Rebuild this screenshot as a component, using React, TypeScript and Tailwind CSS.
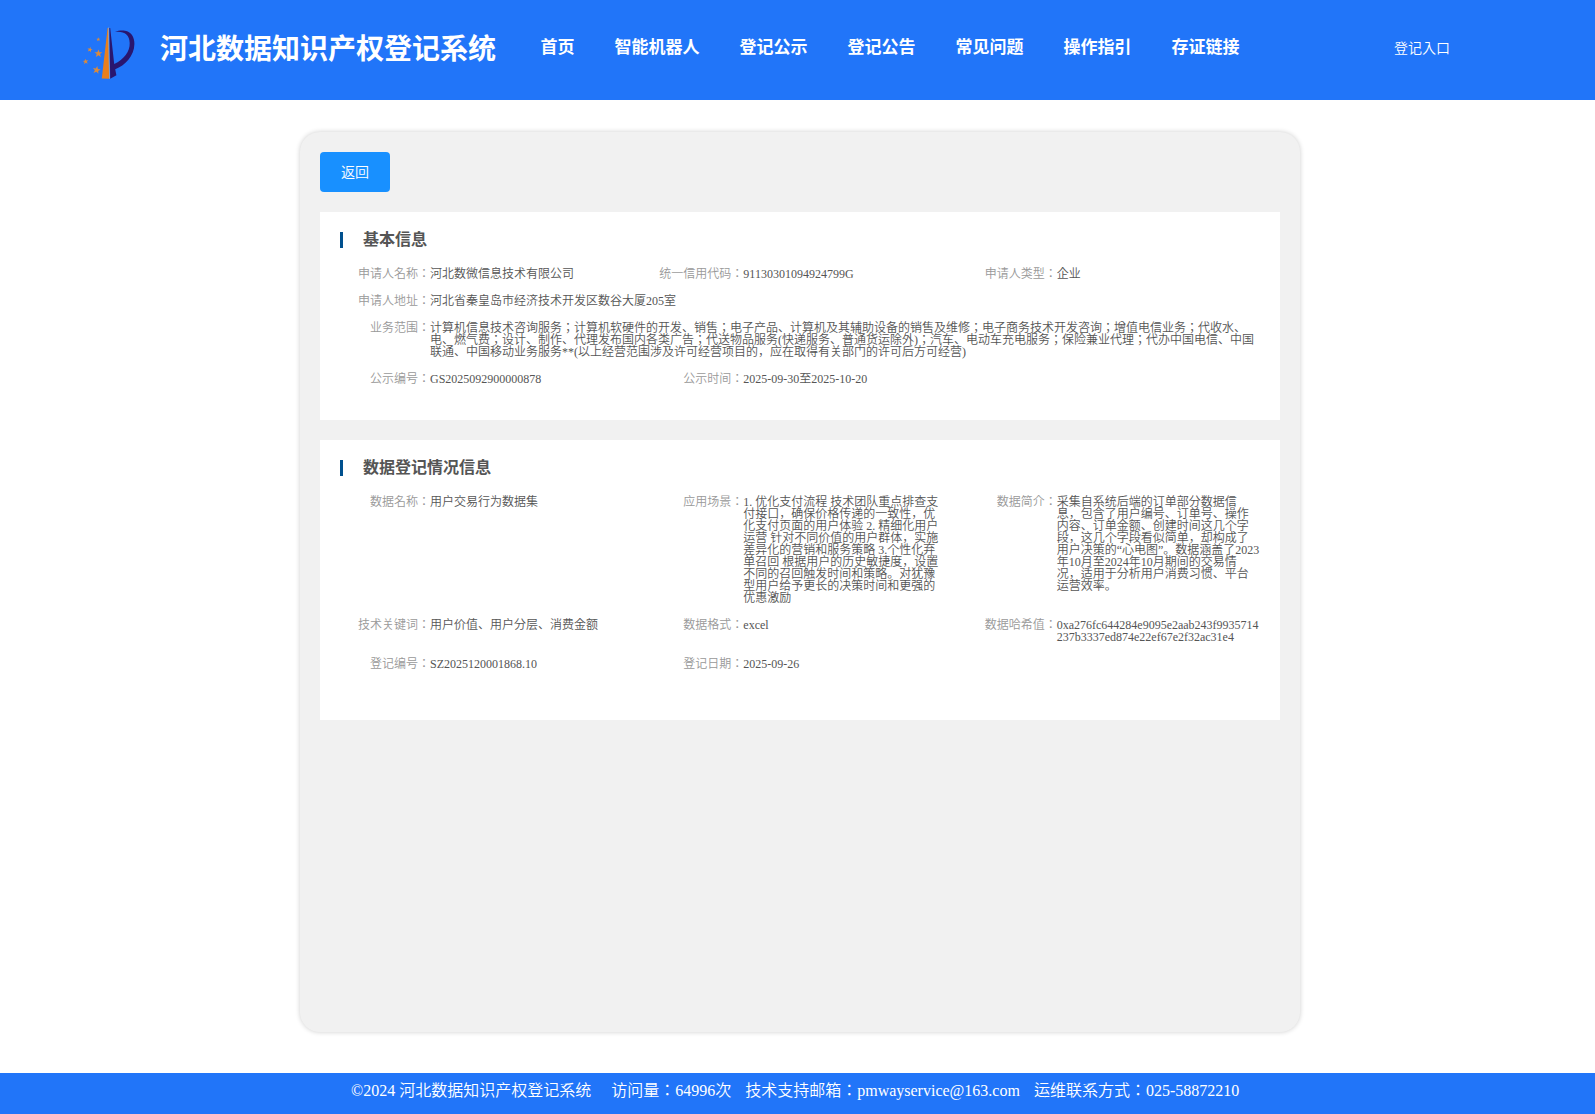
import React from 'react';

interface Field {
  label: string;
  value: string;
  wide?: boolean;
}

interface SectionProps {
  title: string;
  fields: Field[];
  className?: string;
}

const navItems = ['首页', '智能机器人', '登记公示', '登记公告', '常见问题', '操作指引', '存证链接'];

const basicFields: Field[] = [
  { label: '申请人名称', value: '河北数微信息技术有限公司' },
  { label: '统一信用代码', value: '91130301094924799G' },
  { label: '申请人类型', value: '企业' },
  { label: '申请人地址', value: '河北省秦皇岛市经济技术开发区数谷大厦205室', wide: true },
  {
    label: '业务范围',
    value:
      '计算机信息技术咨询服务；计算机软硬件的开发、销售；电子产品、计算机及其辅助设备的销售及维修；电子商务技术开发咨询；增值电信业务；代收水、电、燃气费；设计、制作、代理发布国内各类广告；代送物品服务(快递服务、普通货运除外)；汽车、电动车充电服务；保险兼业代理；代办中国电信、中国联通、中国移动业务服务**(以上经营范围涉及许可经营项目的，应在取得有关部门的许可后方可经营)',
    wide: true,
  },
  { label: '公示编号', value: 'GS2025092900000878' },
  { label: '公示时间', value: '2025-09-30至2025-10-20' },
];

const dataFields: Field[] = [
  { label: '数据名称', value: '用户交易行为数据集' },
  {
    label: '应用场景',
    value:
      '1. 优化支付流程 技术团队重点排查支付接口，确保价格传递的一致性，优化支付页面的用户体验 2. 精细化用户运营 针对不同价值的用户群体，实施差异化的营销和服务策略 3.个性化弃单召回 根据用户的历史敏捷度，设置不同的召回触发时间和策略。对犹豫型用户给予更长的决策时间和更强的优惠激励',
  },
  {
    label: '数据简介',
    value:
      '采集自系统后端的订单部分数据信息，包含了用户编号、订单号、操作内容、订单金额、创建时间这几个字段，这几个字段看似简单，却构成了用户决策的“心电图”。数据涵盖了2023年10月至2024年10月期间的交易情况，适用于分析用户消费习惯、平台运营效率。',
  },
  { label: '技术关键词', value: '用户价值、用户分层、消费金额' },
  { label: '数据格式', value: 'excel' },
  { label: '数据哈希值', value: '0xa276fc644284e9095e2aab243f9935714237b3337ed874e22ef67e2f32ac31e4' },
  { label: '登记编号', value: 'SZ2025120001868.10' },
  { label: '登记日期', value: '2025-09-26' },
];

const STAR = 'M0 -3.4 L0.9 -1.1 L3.3 -1.1 L1.4 0.5 L2.1 2.9 L0 1.5 L-2.1 2.9 L-1.4 0.5 L-3.3 -1.1 L-0.9 -1.1 Z';

const Logo: React.FC = () => (
  <svg width="80" height="80" viewBox="0 0 80 80" className="shrink-0">
    <path d="M37.6 13 L38.6 13 L39.2 63.8 L31.8 63.4 Z" fill="#e97f1c" />
    <path d="M38 12.5 L38.8 12.5 L39.9 63.8 L39.1 63.8 Z" fill="#8fa6c9" />
    <path
      d="M39.4 13 L40.2 13 L44.2 49 C54 44.5 60 36.5 59.7 28 C59.5 19.5 54 15.9 45 16.9 C48 15.5 52 15.3 55 15.7 C61 16.5 64.6 22 64.4 29 C64.2 41 55 50.5 45.2 54.2 L46.4 60.3 L40.2 63.8 Z"
      fill="#29166f"
    />
    <g fill="#d98a3d">
      <path d={STAR} transform="translate(28.4 38.5) scale(1.2)" />
      <path d={STAR} transform="translate(26.6 55) rotate(10) scale(1.2)" />
      <path d={STAR} transform="translate(19.9 34.7) rotate(12) scale(0.8)" />
      <path d={STAR} transform="translate(15.6 46.5) rotate(-8) scale(0.85)" />
      <path d={STAR} transform="translate(28.3 24.4) scale(0.6)" />
    </g>
  </svg>
);

const Section: React.FC<SectionProps> = ({ title, fields, className = '' }) => (
  <section className={`bg-white pt-5 pl-5 ${className}`}>
    <h3 className="mb-5 border-l-[3px] border-[#00508e] pl-5 text-base leading-4 font-bold text-[#555]">{title}</h3>
    <div className="grid grid-cols-3 gap-y-[15px] text-xs leading-3">
      {fields.map((field) => (
        <div key={field.label} className={`flex pr-5 ${field.wide ? 'col-span-3' : ''}`}>
          <span className="w-[90px] shrink-0 text-right text-[#999]">{field.label}：</span>
          <span className="min-w-0 flex-1 break-words text-[#555]">{field.value}</span>
        </div>
      ))}
    </div>
  </section>
);

const App: React.FC = () => {
  return (
    <div className="flex h-[1114px] flex-col bg-white font-['Liberation_Serif','Noto_Sans_CJK_JP',serif] font-[350]">
      {/* Header */}
      <header className="flex h-[100px] shrink-0 items-start bg-[#2175f9] pt-[15px] pl-[70px] text-white">
        <Logo />
        <h1 className="mt-[15px] ml-[10px] text-[28px] leading-10 font-bold whitespace-nowrap">河北数据知识产权登记系统</h1>
        <nav className="mt-[21px] ml-[44.45px] flex gap-10 text-[17px] leading-6 font-bold whitespace-nowrap">
          {navItems.map((item) => (
            <a key={item} href="#">
              {item}
            </a>
          ))}
        </nav>
        <a href="#" className="mt-6 ml-[154.5px] text-sm whitespace-nowrap">
          登记入口
        </a>
      </header>

      {/* Content */}
      <main className="mt-8 ml-[300px] h-[900px] w-[1000px] shrink-0 rounded-[20px] bg-[#f1f1f1] p-5 shadow-[0_0_5px_rgba(0,0,0,0.2)]">
        <button className="mb-5 block h-10 w-[70px] rounded bg-[#1890ff] pt-px text-sm text-white">返回</button>
        <Section title="基本信息" fields={basicFields} className="mb-5 pb-[35px]" />
        <Section title="数据登记情况信息" fields={dataFields} className="pb-[50px]" />
      </main>

      {/* Footer */}
      <footer className="mt-[41px] flex flex-1 items-start bg-[#2175f9] pt-[6px] pl-[351px] text-base leading-6 whitespace-nowrap text-white">
        <span>©2024 河北数据知识产权登记系统</span>
        <span className="ml-5">访问量：64996次</span>
        <span className="ml-[14px]">技术支持邮箱：pmwayservice@163.com</span>
        <span className="ml-[14px]">运维联系方式：025-58872210</span>
      </footer>
    </div>
  );
};

export default App;
